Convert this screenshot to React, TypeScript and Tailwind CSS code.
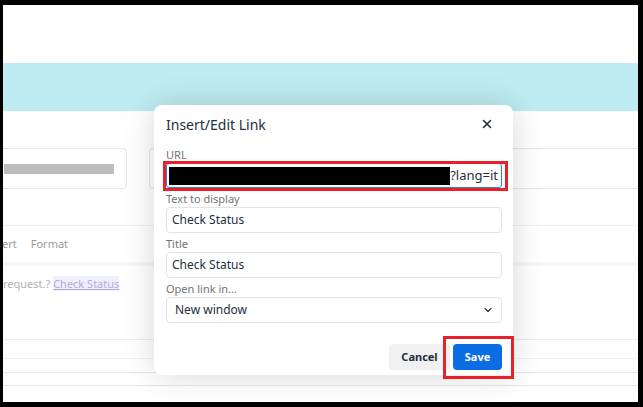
import { X, ChevronDown } from "lucide-react";

const font = { fontFamily: '"Noto Sans", "Open Sans", Arial, sans-serif' };

function Field({ label, value }: { label: string; value: string }) {
  return (
    <div className="flex flex-col">
      <label className="text-[11px] leading-[14px] text-[#727272] mt-[4px] mb-[1px]">{label}</label>
      <div className="h-[26px] rounded-[4px] border border-[#e3e3e3] bg-white px-[5px] flex items-center text-[12px] text-[#222f3e]">
        {value}
      </div>
    </div>
  );
}

export default function App() {
  return (
    <div className="w-[643px] h-[407px] bg-black pt-[5px] pl-[3px] pr-[5px] pb-[5px]" style={font}>
      <div className="relative w-full h-full bg-white overflow-hidden flex flex-col">
        {/* page behind the modal */}
        <div className="h-[58px] shrink-0 bg-white" />
        <div className="h-[48px] shrink-0 bg-[#bdecf2]" />
        <div className="flex gap-[22px] mt-[37px] -ml-[20px]">
          <div className="w-[144px] h-[41px] shrink-0 rounded-[4px] border border-[#e5e5e5] flex items-center pl-[20px]">
            <div className="w-[110px] h-[10px] bg-[#bdbdbd]" />
          </div>
          <div className="flex-1 h-[41px] rounded-[4px] border border-[#e5e5e5] -mr-[20px]" />
        </div>
        <div className="mt-[36px] border-t border-[#f0f0f0]" />
        <div className="flex items-center gap-[14px] h-[36px] text-[11px] text-[#9a9a9a] -ml-[1px]">
          <span>ert</span>
          <span>Format</span>
        </div>
        <div className="h-[4px] bg-[#f7f7f7]" />
        <div className="mt-[10px] text-[11px] text-[#b0b0b0] whitespace-nowrap">
          request.?{" "}
          <span className="text-[#b6a8dc] underline bg-[#eef1fb]">Check Status</span>
        </div>
        <div className="mt-[46px] border-t border-[#ededed]" />
        <div className="mt-[18px] border-t border-[#f3f3f3]" />
        <div className="mt-[13px] border-t border-[#e6e6e6]" />
        <div className="mt-[12px] border-t border-[#e6e6e6]" />

        {/* modal */}
        <div className="absolute left-[151px] top-[100px] w-[359px] h-[270px] rounded-[8px] bg-white shadow-[0_0_32px_rgba(0,0,0,0.16)] flex flex-col px-[12px]">
          <div className="h-[37px] shrink-0 flex items-center justify-between">
            <span className="text-[14px] text-[#222f3e] pt-[1px]">Insert/Edit Link</span>
            <X className="w-[14px] h-[14px] text-[#222f3e] mr-[7px]" strokeWidth={2.6} />
          </div>
          <div className="flex flex-col w-[336px]">
            <label className="text-[11px] leading-[14px] text-[#727272] mt-[6px] mb-[1px]">URL</label>
            <div className="h-[25px] rounded-[3px] border border-[#2f7fe0] bg-white pl-[2px] pr-[3px] flex items-center text-[13px] text-[#222f3e]">
              <div className="flex-1 h-[18px] bg-black" />
              <span>?lang=it</span>
            </div>
            <Field label="Text to display" value="Check Status" />
            <Field label="Title" value="Check Status" />
            <div className="flex flex-col">
              <label className="text-[11px] leading-[14px] text-[#727272] mt-[4px] mb-[1px]">Open link in...</label>
              <div className="h-[26px] rounded-[4px] border border-[#e3e3e3] bg-white pl-[8px] pr-[7px] flex items-center justify-between text-[12px] text-[#222f3e]">
                <span>New window</span>
                <ChevronDown className="w-[12px] h-[12px] text-[#222f3e]" strokeWidth={2.2} />
              </div>
            </div>
          </div>
          <div className="flex justify-end gap-[3px] mt-[21px] w-[336px]">
            <button className="w-[61px] h-[26px] rounded-[4px] bg-[#f0f0f0] text-[11px] font-bold text-[#222f3e]">Cancel</button>
            <button className="w-[49px] h-[26px] rounded-[4px] bg-[#0a6de4] text-[11px] font-bold text-white">Save</button>
          </div>
        </div>

        {/* annotation boxes */}
        <div className="absolute left-[160px] top-[156px] w-[345px] h-[30px] border-[3px] border-[#e8202a]" />
        <div className="absolute left-[440px] top-[331px] w-[71px] h-[43px] border-[3px] border-[#e8202a]" />
      </div>
    </div>
  );
}
